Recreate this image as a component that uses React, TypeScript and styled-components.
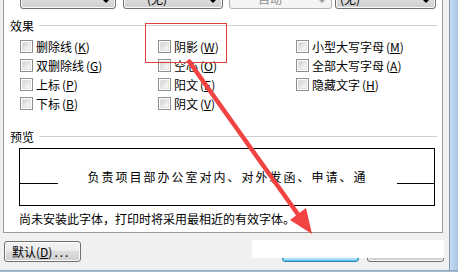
import React from "react";
import styled, { createGlobalStyle } from "styled-components";

const GlobalStyle = createGlobalStyle`
  *, *::before, *::after { box-sizing: border-box; }
  html, body { margin: 0; padding: 0; }
  body {
    width: 458px;
    height: 272px;
    overflow: hidden;
    background: #f0f0f0;
    font-family: "Noto Sans CJK SC", "Liberation Sans", sans-serif;
    font-size: 12px;
    color: #000;
  }
`;

const Window = styled.div`
  position: relative;
  width: 458px;
  height: 272px;
  display: flex;
  flex-direction: column;
  overflow: hidden;
`;

const Body = styled.div`
  display: flex;
  height: 270px;
`;

const Client = styled.div`
  flex: 1;
  display: flex;
  flex-direction: column;
  padding: 0 6px 0 3px;
  background: #f0f0f0;
`;

const SideFrame = styled.div`
  width: 9px;
  border-left: 1px solid #8195ab;
  background: linear-gradient(90deg, #c6dcf1, #aac7e6);
`;

const BottomFrame = styled.div`
  height: 2px;
  background: linear-gradient(#8d9fb3, #a9c3de);
`;

const Panel = styled.div`
  height: 233px;
  display: flex;
  flex-direction: column;
  background: #fff;
  border: 1px solid #9a9a9a;
  border-top: none;
`;

const ComboRow = styled.div`
  display: flex;
  height: 21px;
  margin-top: -12px;
  padding-left: 16px;
`;

const Combo = styled.div<{ $w: number; $gap?: number; $pad?: number; $disabled?: boolean }>`
  width: ${(p) => p.$w}px;
  margin-left: ${(p) => p.$gap ?? 0}px;
  padding-left: ${(p) => p.$pad ?? 4}px;
  padding-right: 6px;
  display: flex;
  align-items: center;
  justify-content: space-between;
  border: 1px solid ${(p) => (p.$disabled ? "#afb3b6" : "#707070")};
  border-radius: 3px;
  color: ${(p) => (p.$disabled ? "#8d8d8d" : "#000")};
  background: ${(p) =>
    p.$disabled
      ? "#f4f4f4"
      : "linear-gradient(#f2f2f2 0%, #ebebeb 50%, #dddddd 50%, #cfcfcf 100%)"};
  box-shadow: inset 0 0 0 1px ${(p) => (p.$disabled ? "#f4f4f4" : "#fbfbfb")};
  line-height: 14px;
`;

const Caret = styled.span<{ $disabled?: boolean }>`
  margin-top: 6px;
  width: 0;
  height: 0;
  border-left: 3px solid transparent;
  border-right: 3px solid transparent;
  border-top: 3px solid ${(p) => (p.$disabled ? "#a0a0a0" : "#000")};
`;

const GroupHead = styled.div<{ $top: number }>`
  display: flex;
  align-items: center;
  height: 16px;
  margin-top: ${(p) => p.$top}px;
  padding: 0 5px 0 6px;
  line-height: 16px;
`;

const GroupRule = styled.div`
  flex: 1;
  height: 1px;
  margin-left: 5px;
  margin-top: -1px;
  background: #cfcfcf;
`;

const CheckGrid = styled.div`
  display: grid;
  grid-auto-flow: column;
  grid-template-columns: 138px 138px 1fr;
  grid-template-rows: repeat(4, 19px);
  margin-top: 3px;
  padding-left: 16px;
`;

const CheckItem = styled.label`
  display: flex;
  align-items: center;
  gap: 3px;
  line-height: 14px;
  white-space: nowrap;
`;

const Box = styled.span`
  position: relative;
  width: 13px;
  height: 13px;
  border: 1px solid #8f8f8f;
  background: #fff;
  &::after {
    content: "";
    position: absolute;
    inset: 1px;
    border: 1px solid #e2e2e2;
    background: linear-gradient(135deg, #cdd0d4 0%, #e9eaec 55%, #f8f8f8 100%);
  }
`;

const Key = styled.span`
  margin-left: 2px;
  u { text-decoration-thickness: 1px; text-underline-offset: 1px; }
`;

const PreviewBox = styled.div`
  width: 416px;
  height: 58px;
  margin: 3px 0 0 15px;
  display: flex;
  align-items: center;
  justify-content: space-between;
  border: 1px solid #000;
`;

const BaseRule = styled.div<{ $w: number }>`
  width: ${(p) => p.$w}px;
  height: 1px;
  margin-top: 12px;
  background: #000;
`;

const SampleText = styled.span`
  letter-spacing: 2px;
  line-height: 16px;
`;

const Note = styled.div`
  margin-top: 5px;
  padding-left: 15px;
  line-height: 16px;
  white-space: nowrap;
`;

const Footer = styled.div`
  display: flex;
  align-items: flex-start;
  padding-top: 8px;
`;

const Button = styled.button<{ $w: number; $focused?: boolean }>`
  width: ${(p) => p.$w}px;
  height: 21px;
  padding: 0 0 0 7px;
  text-align: left;
  font: inherit;
  line-height: 16px;
  color: #000;
  border: 1px solid ${(p) => (p.$focused ? "#3c7fb1" : "#707070")};
  border-radius: 3px;
  background: ${(p) =>
    p.$focused
      ? "linear-gradient(#eaf6fd 0%, #d9f0fc 50%, #bee6fd 50%, #a7d9f5 100%)"
      : "linear-gradient(#f2f2f2 0%, #ebebeb 50%, #dddddd 50%, #cfcfcf 100%)"};
  box-shadow: inset 0 0 0 1px ${(p) => (p.$focused ? "#48c5f9" : "#fbfbfb")};
`;

const Dots = styled.span`
  letter-spacing: 2px;
  margin-left: 2px;
`;

const Spacer = styled.div`
  flex: 1;
`;

const ButtonGroup = styled.div`
  display: flex;
  gap: 8px;
  margin-right: -1px;
`;

/* annotation overlays on top of the screenshot */
const Patch = styled.div`
  position: absolute;
  left: 252px;
  top: 240px;
  width: 192px;
  height: 18px;
  background: #fff;
`;

const Marker = styled.div`
  position: absolute;
  left: 145px;
  top: 23px;
  width: 82px;
  height: 40px;
  border: 1px solid #e2403f;
`;

const ArrowLayer = styled.svg`
  position: absolute;
  left: 0;
  top: 0;
  pointer-events: none;
`;

type Item = { label: string; key: string };

const items: Item[] = [
  { label: "删除线", key: "K" },
  { label: "双删除线", key: "G" },
  { label: "上标", key: "P" },
  { label: "下标", key: "B" },
  { label: "阴影", key: "W" },
  { label: "空心", key: "O" },
  { label: "阳文", key: "E" },
  { label: "阴文", key: "V" },
  { label: "小型大写字母", key: "M" },
  { label: "全部大写字母", key: "A" },
  { label: "隐藏文字", key: "H" },
];

export default function App() {
  return (
    <>
      <GlobalStyle />
      <Window>
        <Body>
          <Client>
            <Panel>
              <ComboRow>
                <Combo $w={96}>
                  <span />
                  <Caret />
                </Combo>
                <Combo $w={100} $gap={7} $pad={23}>
                  <span>(无)</span>
                  <Caret />
                </Combo>
                <Combo $w={103} $gap={6} $pad={28} $disabled>
                  <span>自动</span>
                  <Caret $disabled />
                </Combo>
                <Combo $w={101} $gap={3} $pad={4}>
                  <span>(无)</span>
                  <Caret />
                </Combo>
              </ComboRow>

              <GroupHead $top={9}>
                效果
                <GroupRule />
              </GroupHead>
              <CheckGrid>
                {items.map((it) => (
                  <CheckItem key={it.key}>
                    <Box />
                    <span>
                      {it.label}
                      <Key>
                        (<u>{it.key}</u>)
                      </Key>
                    </span>
                  </CheckItem>
                ))}
              </CheckGrid>

              <GroupHead $top={16}>
                预览
                <GroupRule />
              </GroupHead>
              <PreviewBox>
                <BaseRule $w={38} />
                <SampleText>负责项目部办公室对内、对外发函、申请、通</SampleText>
                <BaseRule $w={37} />
              </PreviewBox>
              <Note>尚未安装此字体，打印时将采用最相近的有效字体。</Note>
            </Panel>

            <Footer>
              <Button $w={77} style={{ marginLeft: 1 }}>
                默认(<u>D</u>)<Dots>...</Dots>
              </Button>
              <Spacer />
              <ButtonGroup>
                <Button $w={77} $focused>
                  确定
                </Button>
                <Button $w={77}>取消</Button>
              </ButtonGroup>
            </Footer>
          </Client>
          <SideFrame />
        </Body>
        <BottomFrame />

        <Patch />
        <Marker />
        <ArrowLayer width={458} height={272} viewBox="0 0 458 272">
          <line x1={188} y1={60} x2={302} y2={220} stroke="#f24343" strokeWidth={4.5} />
          <polygon points="312,234 306,208 290,220" fill="#f24343" />
        </ArrowLayer>
      </Window>
    </>
  );
}
